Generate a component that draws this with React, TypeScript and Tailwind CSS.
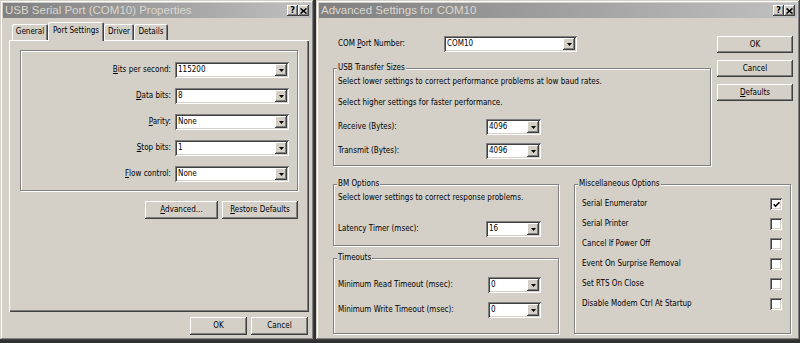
import type { ReactNode } from "react";

const raised =
  "shadow-[inset_-1px_-1px_0_#404040,inset_1px_1px_0_#ffffff,inset_-2px_-2px_0_#808080,inset_2px_2px_0_#d4d0c8]";
const sunken =
  "shadow-[inset_1px_1px_0_#808080,inset_-1px_-1px_0_#ffffff,inset_2px_2px_0_#404040,inset_-2px_-2px_0_#d4d0c8]";
const winFrame =
  "shadow-[inset_-1px_-1px_0_#404040,inset_1px_1px_0_#d4d0c8,inset_-2px_-2px_0_#808080,inset_2px_2px_0_#ffffff]";
const etched =
  "border border-[#808080] shadow-[1px_1px_0_#ffffff,inset_1px_1px_0_#ffffff]";
const tabShadow =
  "shadow-[inset_1px_1px_0_#ffffff,inset_-1px_0_0_#404040,inset_-2px_0_0_#808080]";

function TitleBtn({ children }: { children: ReactNode }) {
  return (
    <span
      className={`${raised} bg-[#d4d0c8] w-[11px] h-[11px] flex items-center justify-center text-[9px] font-bold leading-none text-black`}
    >
      {children}
    </span>
  );
}

function TitleBar({ title }: { title: string }) {
  return (
    <div className="h-[15px] flex items-center bg-linear-to-r from-[#808080] to-[#c0c0c0] pl-[2px] pr-[2px]">
      <span className="flex-1 font-['Liberation_Sans',Arial,sans-serif] text-[11.5px] leading-none text-[#dcd8d0] whitespace-nowrap">
        {title}
      </span>
      <TitleBtn>?</TitleBtn>
      <TitleBtn>
        <svg width="7" height="6" viewBox="0 0 7 6">
          <path d="M0.5 0.5L6.5 5.5M6.5 0.5L0.5 5.5" stroke="#000" strokeWidth="1.6" />
        </svg>
      </TitleBtn>
    </div>
  );
}

function Btn({ children, className = "" }: { children: ReactNode; className?: string }) {
  return (
    <button
      type="button"
      className={`${raised} bg-[#d4d0c8] flex items-center justify-center text-[8px] leading-none text-black ${className}`}
    >
      {children}
    </button>
  );
}

function Combo({ value, className = "" }: { value: string; className?: string }) {
  return (
    <div className={`${sunken} bg-white flex items-center h-[16px] p-[2px] ${className}`}>
      <span className="flex-1 pl-[1px] text-[8px] leading-none">{value}</span>
      <span
        className={`${raised} bg-[#d4d0c8] w-[12px] h-full flex items-center justify-center`}
      >
        <svg width="5" height="3" viewBox="0 0 5 3">
          <path d="M0 0h5L2.5 3z" fill="#000" />
        </svg>
      </span>
    </div>
  );
}

function Check({ checked = false }: { checked?: boolean }) {
  return (
    <span className={`${sunken} bg-white w-[12px] h-[12px] flex items-center justify-center`}>
      {checked && (
        <svg width="7" height="7" viewBox="0 0 7 7">
          <path d="M0.7 3.2L2.6 5.2L6.4 1.2" stroke="#000" strokeWidth="1.6" fill="none" />
        </svg>
      )}
    </span>
  );
}

function Group({
  caption,
  className = "",
  children,
}: {
  caption: string;
  className?: string;
  children: ReactNode;
}) {
  return (
    <div className={`relative ${etched} ${className}`}>
      <span className="absolute -top-[6px] left-[3px] px-[1px] bg-[#d4d0c8] text-[8px] leading-[10px] whitespace-nowrap">
        {caption}
      </span>
      {children}
    </div>
  );
}

function PortRow({ label, value }: { label: ReactNode; value: string }) {
  return (
    <div className="h-[16px] flex items-center justify-end gap-[4px] pr-[8px]">
      <span className="text-[8px] leading-none whitespace-nowrap">{label}</span>
      <Combo value={value} className="w-[114px]" />
    </div>
  );
}

function Tab({ label, active = false, w }: { label: string; active?: boolean; w: string }) {
  return (
    <div
      className={`${tabShadow} bg-[#d4d0c8] rounded-t-[2px] flex items-center justify-center text-[8px] leading-none whitespace-nowrap ${w} ${
        active ? "h-[19px] -mb-[1px] relative z-10 pb-[2px]" : "h-[16px]"
      }`}
    >
      {label}
    </div>
  );
}

function FieldRow({
  label,
  value,
  labelW,
  comboW,
}: {
  label: string;
  value: string;
  labelW: string;
  comboW: string;
}) {
  return (
    <div className="h-[16px] flex items-center">
      <span className={`${labelW} text-[8px] leading-none whitespace-nowrap`}>{label}</span>
      <Combo value={value} className={comboW} />
    </div>
  );
}

const miscOptions = [
  { label: "Serial Enumerator", checked: true },
  { label: "Serial Printer", checked: false },
  { label: "Cancel If Power Off", checked: false },
  { label: "Event On Surprise Removal", checked: false },
  { label: "Set RTS On Close", checked: false },
  { label: "Disable Modem Ctrl At Startup", checked: false },
];

export default function App() {
  return (
    <div className="w-[800px] h-[343px] bg-[#303030] flex gap-[2px] font-['DejaVu_Sans_Condensed','DejaVu_Sans',sans-serif] text-black">
      {/* Properties window */}
      <div className={`w-[314px] h-[340px] bg-[#d4d0c8] p-[3px] flex flex-col ${winFrame}`}>
        <TitleBar title="USB Serial Port (COM10) Properties" />
        <div className="flex flex-col pl-[6px] pt-[4px]">
          <div className="flex items-end h-[18px] pl-[3px]">
            <Tab label="General" w="w-[36px]" />
            <Tab label="Port Settings" w="w-[56px]" active />
            <Tab label="Driver" w="w-[30px]" />
            <Tab label="Details" w="w-[34px]" />
          </div>
          <div
            className={`w-[300px] h-[272px] pt-[10px] pl-[11px] shadow-[inset_1px_1px_0_#ffffff,inset_-1px_-1px_0_#404040,inset_-2px_-2px_0_#808080]`}
          >
            <div className={`${etched} w-[278px] h-[141px] pt-[11px] flex flex-col gap-[10px]`}>
              <PortRow label={<><u>B</u>its per second:</>} value="115200" />
              <PortRow label={<><u>D</u>ata bits:</>} value="8" />
              <PortRow label={<><u>P</u>arity:</>} value="None" />
              <PortRow label={<><u>S</u>top bits:</>} value="1" />
              <PortRow label={<><u>F</u>low control:</>} value="None" />
            </div>
            <div className="w-[278px] mt-[10px] flex justify-end gap-[4px]">
              <Btn className="w-[73px] h-[18px]">
                <span><u>A</u>dvanced...</span>
              </Btn>
              <Btn className="w-[76px] h-[18px]">
                <span><u>R</u>estore Defaults</span>
              </Btn>
            </div>
          </div>
          <div className="w-[300px] mt-[5px] pr-[1px] flex justify-end gap-[4px]">
            <Btn className="w-[57px] h-[18px]">OK</Btn>
            <Btn className="w-[57px] h-[18px]">Cancel</Btn>
          </div>
        </div>
      </div>

      {/* Advanced settings window */}
      <div className={`w-[484px] h-[340px] bg-[#d4d0c8] p-[3px] flex flex-col ${winFrame}`}>
        <TitleBar title="Advanced Settings for COM10" />
        <div className="pl-[14px] pt-[18px]">
          <div className="flex items-start">
            <div className="w-[378px]">
              <div className="h-[16px] flex items-center pl-[5px]">
                <span className="w-[106px] text-[8px] leading-none whitespace-nowrap">
                  COM <u>P</u>ort Number:
                </span>
                <Combo value="COM10" className="w-[133px]" />
              </div>
              <Group caption="USB Transfer Sizes" className="mt-[16px] h-[98px] pl-[4px] pt-[8px]">
                <p className="text-[8px] leading-[10px] whitespace-nowrap">
                  Select lower settings to correct performance problems at low baud rates.
                </p>
                <p className="mt-[11px] text-[8px] leading-[10px] whitespace-nowrap">
                  Select higher settings for faster performance.
                </p>
                <div className="mt-[11px]">
                  <FieldRow label="Receive (Bytes):" value="4096" labelW="w-[148px]" comboW="w-[55px]" />
                </div>
                <div className="mt-[8px]">
                  <FieldRow label="Transmit (Bytes):" value="4096" labelW="w-[148px]" comboW="w-[55px]" />
                </div>
              </Group>
            </div>
            <div className="ml-[6px] flex flex-col gap-[7px]">
              <Btn className="w-[76px] h-[17px]">OK</Btn>
              <Btn className="w-[76px] h-[17px]">Cancel</Btn>
              <Btn className="w-[76px] h-[17px]">
                <span><u>D</u>efaults</span>
              </Btn>
            </div>
          </div>

          <div className="flex items-start mt-[18px]">
            <div className="w-[226px] flex flex-col">
              <Group caption="BM Options" className="h-[62px] pl-[4px] pt-[8px]">
                <p className="text-[8px] leading-[10px] whitespace-nowrap">
                  Select lower settings to correct response problems.
                </p>
                <div className="mt-[18px]">
                  <FieldRow label="Latency Timer (msec):" value="16" labelW="w-[148px]" comboW="w-[55px]" />
                </div>
              </Group>
              <Group caption="Timeouts" className="mt-[12px] h-[76px] pl-[4px] pt-[18px]">
                <FieldRow
                  label="Minimum Read Timeout (msec):"
                  value="0"
                  labelW="w-[150px]"
                  comboW="w-[53px]"
                />
                <div className="mt-[9px]">
                  <FieldRow
                    label="Minimum Write Timeout (msec):"
                    value="0"
                    labelW="w-[150px]"
                    comboW="w-[53px]"
                  />
                </div>
              </Group>
            </div>
            <Group caption="Miscellaneous Options" className="ml-[15px] w-[217px] h-[150px] pt-[9px] pl-[7px] pr-[8px]">
              {miscOptions.map((opt) => (
                <div key={opt.label} className="h-[20px] flex items-center justify-between">
                  <span className="text-[8px] leading-none whitespace-nowrap">{opt.label}</span>
                  <Check checked={opt.checked} />
                </div>
              ))}
            </Group>
          </div>
        </div>
      </div>
    </div>
  );
}
